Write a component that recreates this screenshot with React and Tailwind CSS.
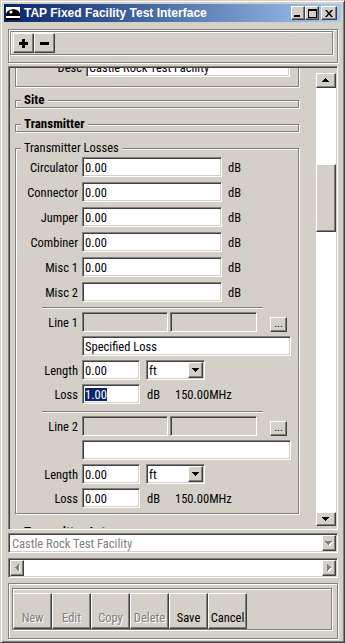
import React from 'react';

const FONT = "font-['Roboto_Condensed','Liberation_Sans_Narrow','Liberation_Sans',sans-serif]";
const sunken = 'border border-t-[#808080] border-l-[#808080] border-r-white border-b-white shadow-[inset_1px_1px_0_#404040,inset_-1px_-1px_0_#d4d0c8]';
const raised = 'border border-t-white border-l-white border-r-[#404040] border-b-[#404040] shadow-[inset_-1px_-1px_0_#808080,inset_1px_1px_0_#d4d0c8]';
const etched = 'border border-[#808080] shadow-[inset_1px_1px_0_#fff,1px_1px_0_#fff]';
const disabledText = 'text-[#808080] [text-shadow:1px_1px_0_#fff]';

// pixel arrows, same shapes as the classic scrollbar glyphs
const UP = 'M3 0h1v1h1v1h1v1h1v1H0V3h1V2h1V1h1z';
const DOWN = 'M0 0h7v1h-1v1h-1v1h-1v1h-1v-1h-1v-1h-1v-1h-1z';
const LEFT = 'M3 0h1v7h-1v-1h-1v-1h-1v-1h-1v-1h1v-1h1v-1h1z';
const RIGHT = 'M0 0h1v1h1v1h1v1h1v1h-1v1h-1v1h-1v1H0z';

function Arrow({ d, w, h, disabled }) {
  return (
    <svg width={w + 1} height={h + 1} viewBox={`0 0 ${w + 1} ${h + 1}`} shapeRendering="crispEdges">
      {disabled && <path d={d} fill="#fff" transform="translate(1 1)" />}
      <path d={d} fill={disabled ? '#808080' : '#000'} />
    </svg>
  );
}

function Field({ className = '', gray = false, children }) {
  return (
    <div className={`h-[20px] shrink-0 flex items-center pl-[2px] overflow-hidden whitespace-nowrap ${gray ? 'bg-[#d4d0c8]' : 'bg-white'} ${sunken} ${className}`}>
      {children}
    </div>
  );
}

function Group({ title, bold = false, className = '', children }) {
  return (
    <fieldset className={`w-[284px] ${etched} ${className}`}>
      <legend className={`ml-[5px] px-[3px] h-[14px] leading-[14px] bg-[#d4d0c8] ${bold ? 'font-bold text-[13px]' : ''}`}>{title}</legend>
      {children}
    </fieldset>
  );
}

function TitleBar() {
  return (
    <div className="h-[18px] flex items-center bg-linear-to-r from-[#0a246a] to-[#a6caf0] pr-[4px]">
      <svg className="ml-[1px]" width="16" height="16" viewBox="0 0 16 16">
        <rect x="1" y="2" width="14" height="13" fill="#fff" />
        <path d="M1 10 C1 3, 14 2, 15 9 L15 11 L1 11 Z" fill="#000" />
        <circle cx="6" cy="7" r="1.6" fill="#fff" />
        <rect x="1" y="13" width="14" height="2" fill="#000" />
      </svg>
      <span className="ml-[3px] text-white font-bold text-[12px] font-['Liberation_Sans',Arial,sans-serif] whitespace-nowrap">
        TAP Fixed Facility Test Interface
      </span>
      <div className="ml-auto flex items-center">
        <div className={`w-[14px] h-[14px] ${raised} bg-[#d4d0c8] flex items-end pl-[2px] pb-[2px]`}>
          <div className="w-[6px] h-[2px] bg-black" />
        </div>
        <div className={`w-[14px] h-[14px] ${raised} bg-[#d4d0c8] flex items-center justify-center`}>
          <svg width="9" height="9" viewBox="0 0 9 9" shapeRendering="crispEdges">
            <path d="M0 0h9v9H0z M1 2v6h7V2z" fillRule="evenodd" fill="#000" />
          </svg>
        </div>
        <div className={`ml-[2px] w-[16px] h-[14px] ${raised} bg-[#d4d0c8] flex items-center justify-center`}>
          <svg width="8" height="7" viewBox="0 0 8 7">
            <path d="M0 0h2l2 2.4L6 0h2L5 3.5 8 7H6L4 4.6 2 7H0l3-3.5z" fill="#000" />
          </svg>
        </div>
      </div>
    </div>
  );
}

function Toolbar() {
  return (
    <div className={`mt-[7px] h-[34px] ${etched} pt-[1px] pl-[1px] pr-[4px] pb-[7px]`}>
      <div className={`h-[24px] ${etched} flex pl-[2px] pt-[1px]`}>
        <button className={`w-[21px] h-[20px] ${raised} bg-[#d4d0c8] flex items-center justify-center`}>
          <svg width="9" height="9" viewBox="0 0 9 9" shapeRendering="crispEdges">
            <path d="M3 0h3v3h3v3H6v3H3V6H0V3h3z" fill="#000" />
          </svg>
        </button>
        <button className={`w-[21px] h-[20px] ${raised} bg-[#d4d0c8] flex items-center justify-center`}>
          <svg width="9" height="3" viewBox="0 0 9 3" shapeRendering="crispEdges">
            <rect width="9" height="3" fill="#000" />
          </svg>
        </button>
      </div>
    </div>
  );
}

function LossRow({ label, value }) {
  return (
    <div className="flex items-center h-[20px]">
      <span className="w-[62px] text-right">{label}</span>
      <Field className="ml-[4px] w-[140px]">{value}</Field>
      <span className="ml-[6px]">dB</span>
    </div>
  );
}

function LineBlock({ label, spec, selected }) {
  return (
    <div className="flex flex-col gap-[4px]">
      <div className="flex items-end h-[20px]">
        <span className="w-[62px] text-right self-center">{label}</span>
        <Field gray className="ml-[4px] w-[86px]" />
        <Field gray className="ml-[2px] w-[87px]" />
        <div className={`ml-[13px] w-[17px] h-[15px] ${raised} bg-[#d4d0c8] flex items-end justify-center text-[11px] leading-[11px] pb-[2px]`}>
          ...
        </div>
      </div>
      <Field className="ml-[66px] w-[209px]">{spec}</Field>
      <div className="flex items-center h-[20px]">
        <span className="w-[62px] text-right">Length</span>
        <Field className="ml-[4px] w-[58px]">0.00</Field>
        <div className={`ml-[6px] w-[59px] h-[20px] ${sunken} bg-white flex p-[1px]`}>
          <span className="flex-1 pl-[1px] self-center">ft</span>
          <div className={`w-[15px] ${raised} bg-[#d4d0c8] flex items-center justify-center`}>
            <Arrow d={DOWN} w={7} h={4} />
          </div>
        </div>
      </div>
      <div className="flex items-center h-[20px]">
        <span className="w-[62px] text-right">Loss</span>
        <Field className="ml-[4px] w-[58px]">
          {selected ? <span className="bg-[#0a246a] text-white leading-[13px]">1.00</span> : '0.00'}
        </Field>
        <span className="ml-[7px] w-[28px]">dB</span>
        <span>150.00MHz</span>
      </div>
    </div>
  );
}

function Separator() {
  return <div className="ml-[26px] w-[221px] h-[2px] border-t border-t-[#808080] border-b border-b-white" />;
}

function MainPane() {
  return (
    <div className={`mt-[3px] h-[464px] ${sunken} p-[1px] flex`}>
      {/* scrolled content */}
      <div className="flex-1 overflow-hidden">
        <div className="mt-[-50px] pl-[5px] flex flex-col">
          <Group title="Facility" bold>
            <div className="pt-0 pb-[9px] flex flex-col gap-[5px]">
              <div className="flex items-center h-[20px]">
                <span className="w-[66px] text-right">Name</span>
                <Field className="ml-[4px] w-[204px]">Castle Rock</Field>
              </div>
              <div className="flex items-center h-[20px]">
                <span className="w-[66px] text-right">Desc</span>
                <Field className="ml-[4px] w-[204px]">Castle Rock Test Facility</Field>
              </div>
            </div>
          </Group>

          <Group title="Site" bold className="mt-[6px]" />
          <Group title="Transmitter" bold className="mt-[9px]" />

          <Group title="Transmitter Losses" className="mt-[9px]">
            <div className="pt-[2px] pb-[5px] flex flex-col">
              <div className="flex flex-col gap-[5px]">
                <LossRow label="Circulator" value="0.00" />
                <LossRow label="Connector" value="0.00" />
                <LossRow label="Jumper" value="0.00" />
                <LossRow label="Combiner" value="0.00" />
                <LossRow label="Misc 1" value="0.00" />
                <LossRow label="Misc 2" value="" />
              </div>
              <div className="mt-[5px]"><Separator /></div>
              <div className="mt-[3px]">
                <LineBlock label="Line 1" spec="Specified Loss" selected />
              </div>
              <div className="mt-[7px]"><Separator /></div>
              <div className="mt-[3px]">
                <LineBlock label="Line 2" spec="" />
              </div>
            </div>
          </Group>

          <Group title="Transmitter Antenna" bold className="mt-[11px]">
            <div className="h-[60px]" />
          </Group>
        </div>
      </div>

      {/* vertical scrollbar */}
      <div className="w-[20px] flex flex-col pt-[5px] pb-[2px]">
        <div className={`h-[15px] ${raised} bg-[#d4d0c8] flex items-center justify-center`}>
          <Arrow d={UP} w={7} h={4} />
        </div>
        <div className="flex-1 bg-white flex flex-col">
          <div className={`mt-[76px] h-[68px] ${raised} bg-[#d4d0c8]`} />
        </div>
        <div className={`h-[14px] ${raised} bg-[#d4d0c8] flex items-center justify-center`}>
          <Arrow d={DOWN} w={7} h={4} />
        </div>
      </div>
    </div>
  );
}

function Combo() {
  return (
    <div className={`mt-[3px] h-[20px] ${sunken} bg-white p-[1px] flex`}>
      <span className="flex-1 pl-[2px] self-center text-[#808080] whitespace-nowrap">Castle Rock Test Facility</span>
      <div className={`w-[14px] ${raised} bg-[#d4d0c8] flex items-center justify-center`}>
        <Arrow d={DOWN} w={7} h={4} disabled />
      </div>
    </div>
  );
}

function HScroll() {
  return (
    <div className={`mt-[5px] h-[20px] ${sunken} p-[1px] flex`}>
      <div className={`w-[14px] ${raised} bg-[#d4d0c8] flex items-center justify-center`}>
        <Arrow d={LEFT} w={4} h={7} disabled />
      </div>
      <div className="flex-1 bg-white" />
      <div className={`w-[14px] ${raised} bg-[#d4d0c8] flex items-center justify-center`}>
        <Arrow d={RIGHT} w={4} h={7} disabled />
      </div>
    </div>
  );
}

function ButtonBar() {
  const buttons = [
    { label: 'New', enabled: false },
    { label: 'Edit', enabled: false },
    { label: 'Copy', enabled: false },
    { label: 'Delete', enabled: false },
    { label: 'Save', enabled: true },
    { label: 'Cancel', enabled: true },
  ];
  return (
    <div className={`mt-[5px] h-[56px] ${etched} pl-[3px] pt-[4px] pr-[5px] pb-[8px]`}>
      <div className={`h-[42px] ${etched} pt-[4px] flex`}>
        {buttons.map((b) => (
          <button
            key={b.label}
            className={`w-[39px] h-[36px] ${raised} bg-[#d4d0c8] flex items-end justify-center pb-[3px] ${b.enabled ? 'text-black' : disabledText}`}
          >
            {b.label}
          </button>
        ))}
      </div>
    </div>
  );
}

export default function App() {
  return (
    <div className={`w-[345px] h-[643px] bg-[#d4d0c8] text-black ${FONT} text-[12.5px] leading-[15px] border border-t-[#d4d0c8] border-l-[#d4d0c8] border-r-[#404040] border-b-[#404040] shadow-[inset_1px_1px_0_#fff,inset_-1px_-1px_0_#808080] p-[3px] flex flex-col overflow-hidden`}>
      <TitleBar />
      <div className="flex flex-col pl-[4px] pr-[3px]">
        <Toolbar />
        <MainPane />
        <Combo />
        <HScroll />
        <ButtonBar />
      </div>
    </div>
  );
}
